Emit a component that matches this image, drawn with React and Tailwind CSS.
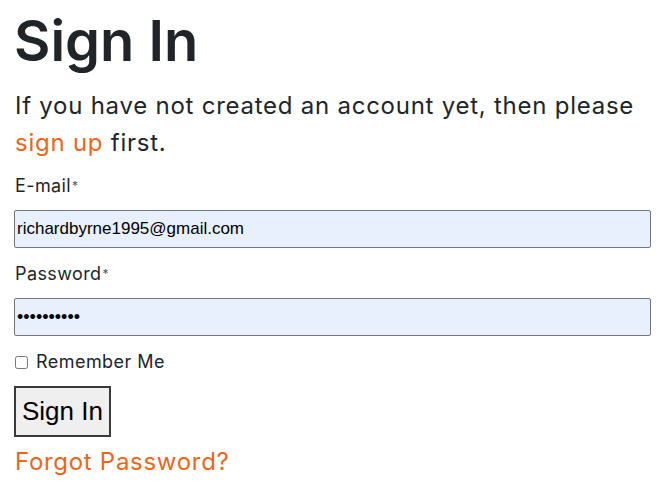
import React from 'react';

const App = () => {
  return (
    <div className="min-h-screen bg-white px-[14px] pt-[8px] text-[#212529] font-['Inter',sans-serif]">
      {/* Header */}
      <h1 className="text-[56px] font-semibold leading-[1.2]">Sign In</h1>
      <p className="mt-[12px] ml-[1px] text-[24px] leading-[37px] tracking-[0.75px]">
        If you have not created an account yet, then please{' '}
        <a href="#" className="text-[#e8671c]">sign up</a> first.
      </p>

      {/* Form */}
      <form className="mt-[13px]">
        <label className="block ml-[1px] text-[18px] leading-[24px] tracking-[0.4px]">
          E-mail<span className="text-[12px] text-[#555] align-[2px] ml-[1px]">*</span>
        </label>
        <input
          type="email"
          readOnly
          value="richardbyrne1995@gmail.com"
          className="mt-[12px] block w-[637px] h-[38px] border border-[#767676] rounded-[2px] bg-[#e8f0fe] px-[2px] text-[17px] text-black font-['Liberation_Sans',Arial,sans-serif]"
        />
        <label className="mt-[14px] ml-[1px] block text-[18px] leading-[24px] tracking-[0.4px]">
          Password<span className="text-[12px] text-[#555] align-[2px] ml-[1px]">*</span>
        </label>
        <input
          type="password"
          readOnly
          value="••••••••••"
          className="mt-[12px] block w-[637px] h-[38px] border border-[#767676] rounded-[2px] bg-[#e8f0fe] px-[2px] text-[18px] text-black font-['Liberation_Sans',Arial,sans-serif]"
        />
        <div className="mt-[14px] flex items-center gap-[8px]">
          <input type="checkbox" className="w-[13px] h-[13px] ml-[1px]" />
          <span className="text-[18px] leading-[24px] tracking-[0.45px]">Remember Me</span>
        </div>
        <button
          type="button"
          className="mt-[12px] block h-[51px] px-[6px] border-2 border-[#3a3a3a] bg-[#efefef] text-[26px] text-black font-['Liberation_Sans',Arial,sans-serif]"
        >
          Sign In
        </button>
        <a href="#" className="mt-[8px] ml-[1px] block text-[24px] leading-[34px] tracking-[0.7px] text-[#e8671c]">
          Forgot Password?
        </a>
      </form>
    </div>
  );
};

export default App;
